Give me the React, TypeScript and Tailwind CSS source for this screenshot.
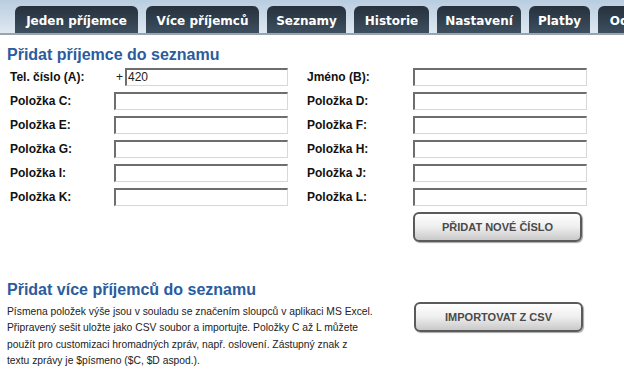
import React from "react";

const font = { fontFamily: '"DejaVu Sans", Verdana, sans-serif' };
const arial = { fontFamily: '"Liberation Sans", Arial, sans-serif' };

function Tab({ label, w }: { label: string; w: string }) {
  return (
    <div
      className={`${w} h-[27px] shrink-0 rounded-t-[6px] bg-gradient-to-b from-[#26313c] to-[#3d4f5f] text-white font-bold text-[12px] flex items-end justify-center pb-[6px] leading-none`}
    >
      {label}
    </div>
  );
}

function Field({ w = "w-[174px]" }: { w?: string }) {
  return (
    <div
      className={`${w} h-[18px] bg-white border-t-2 border-l-2 border-t-[#6e6e6e] border-l-[#6e6e6e] border-r border-b border-r-[#d8d8d8] border-b-[#d8d8d8]`}
    />
  );
}

function Row({ l, r, first }: { l: string; r: string; first?: boolean }) {
  return (
    <div className="flex items-center h-[24px]" style={arial}>
      <div className="w-[104px] text-[12px] font-bold text-[#111]">{l}</div>
      {first ? (
        <div className="w-[174px] flex items-center">
          <span className="w-[11px] text-[12px] text-[#222] pl-[2px]">+</span>
          <div className="w-[163px] h-[18px] bg-white border-t-2 border-l-2 border-t-[#6e6e6e] border-l-[#6e6e6e] border-r border-b border-r-[#d8d8d8] border-b-[#d8d8d8] text-[12px] leading-[15px] pl-[1px] text-[#222]">
            420
          </div>
        </div>
      ) : (
        <Field />
      )}
      <div className="w-[19px]" />
      <div className="w-[106px] text-[12px] font-bold text-[#111]">{r}</div>
      <Field />
    </div>
  );
}

function Btn({ label }: { label: string }) {
  return (
    <div
      className="w-[169px] h-[30px] rounded-[6px] border-2 border-[#5a5a5a] bg-gradient-to-b from-[#ffffff] via-[#eeeeee] to-[#c9c9c9] flex items-center justify-center text-[11px] font-bold text-[#4a4a4a] shadow-[1px_1px_1px_rgba(0,0,0,0.35)]"
      style={arial}
    >
      {label}
    </div>
  );
}

export default function App() {
  return (
    <div className="w-[624px] h-[390px] overflow-hidden bg-white" style={font}>
      <div className="h-[35px] bg-gradient-to-b from-[#b9cde0] to-[#dfe8f1] border-b-2 border-b-[#9aa4ad] flex items-end pl-[15px] gap-[8px] overflow-hidden">
        <Tab label="Jeden příjemce" w="w-[123px]" />
        <Tab label="Více příjemců" w="w-[113px]" />
        <Tab label="Seznamy" w="w-[79px]" />
        <Tab label="Historie" w="w-[75px]" />
        <Tab label="Nastavení" w="w-[84px]" />
        <Tab label="Platby" w="w-[61px]" />
        <Tab label="Odhlásit" w="w-[80px]" />
      </div>
      <div className="pl-[7px] pt-[10px]">
        <div className="text-[16px] font-bold text-[#2a5c9e] leading-[20px]" style={arial}>
          Přidat příjemce do seznamu
        </div>
      </div>
      <div className="pl-[10px] pt-[0px]">
        <Row l="Tel. číslo (A):" r="Jméno (B):" first />
        <Row l="Položka C:" r="Položka D:" />
        <Row l="Položka E:" r="Položka F:" />
        <Row l="Položka G:" r="Položka H:" />
        <Row l="Položka I:" r="Položka J:" />
        <Row l="Položka K:" r="Položka L:" />
        <div className="pl-[403px] pt-[3px]">
          <Btn label="PŘIDAT NOVÉ ČÍSLO" />
        </div>
      </div>
      <div className="pl-[7px] pt-[38px]">
        <div className="text-[16px] font-bold text-[#2a5c9e] leading-[20px]" style={arial}>
          Přidat více příjemců do seznamu
        </div>
        <div className="flex">
          <p className="w-[380px] text-[10.3px] leading-[16.3px] text-[#222] pt-[4px] whitespace-nowrap" style={arial}>
            Písmena položek výše jsou v souladu se značením sloupců v aplikaci MS Excel.
            <br />
            Připravený sešit uložte jako CSV soubor a importujte. Položky C až L můžete
            <br />
            použít pro customizaci hromadných zpráv, např. oslovení. Zástupný znak z
            <br />
            textu zprávy je $písmeno ($C, $D aspod.).
          </p>
          <div className="pl-[27px] pt-[2px]">
            <Btn label="IMPORTOVAT Z CSV" />
          </div>
        </div>
      </div>
    </div>
  );
}
